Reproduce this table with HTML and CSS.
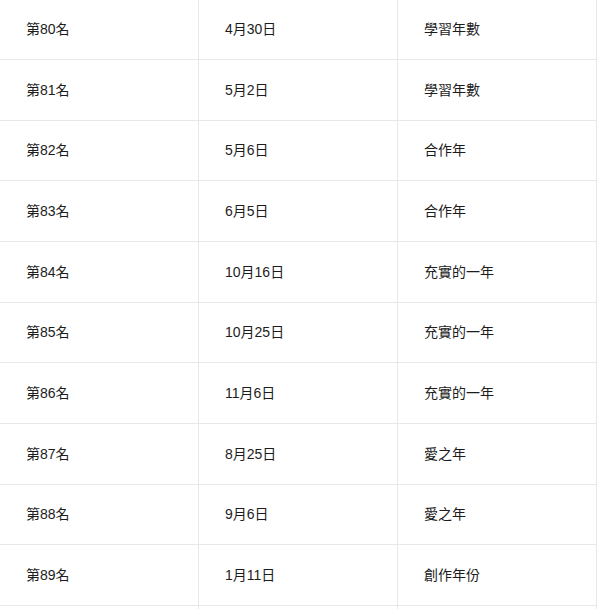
FILE: index.html
```html
<!DOCTYPE html>
<html lang="zh-Hant">
<head>
<meta charset="utf-8">
<title>排名</title>
<link rel="stylesheet" href="styles.css">
</head>
<body>
<table class="rank-table">
  <tbody>
    <tr><td>第80名</td><td>4月30日</td><td>學習年數</td></tr>
    <tr><td>第81名</td><td>5月2日</td><td>學習年數</td></tr>
    <tr><td>第82名</td><td>5月6日</td><td>合作年</td></tr>
    <tr><td>第83名</td><td>6月5日</td><td>合作年</td></tr>
    <tr><td>第84名</td><td>10月16日</td><td>充實的一年</td></tr>
    <tr><td>第85名</td><td>10月25日</td><td>充實的一年</td></tr>
    <tr><td>第86名</td><td>11月6日</td><td>充實的一年</td></tr>
    <tr><td>第87名</td><td>8月25日</td><td>愛之年</td></tr>
    <tr><td>第88名</td><td>9月6日</td><td>愛之年</td></tr>
    <tr><td>第89名</td><td>1月11日</td><td>創作年份</td></tr>
    <tr class="rank-table__tail"><td></td><td></td><td></td></tr>
  </tbody>
</table>
</body>
</html>
```

FILE: styles.css
```css
html, body {
  margin: 0;
  padding: 0;
  background: #ffffff;
  overflow: hidden;
}

body {
  font-family: "Liberation Sans", "Noto Sans CJK TC", sans-serif;
  font-size: 14px;
  color: #1c1c1c;
}

.rank-table {
  border-collapse: collapse;
  table-layout: fixed;
  width: 598px;
  margin-top: -1.67px;
  margin-left: -1px;
}

.rank-table td {
  border: 1px solid #e8e8e8;
  height: 60.67px;
  padding: 0 0 0 26px;
  box-sizing: border-box;
  width: 199px;
  vertical-align: middle;
  line-height: 20px;
  white-space: nowrap;
}
```
